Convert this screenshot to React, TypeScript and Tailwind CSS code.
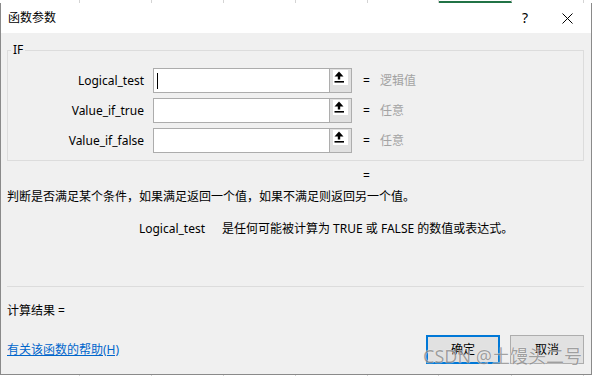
import React from 'react'

// 函数参数 dialog (Excel IF)
const params = [
  { id: 'test', label: 'Logical_test', value: '逻辑值', focused: true },
  { id: 'true', label: 'Value_if_true', value: '任意', focused: false },
  { id: 'false', label: 'Value_if_false', value: '任意', focused: false },
]

const gridCells = [
  { w: 'w-[80px]', sel: false },
  { w: 'w-[72px]', sel: false },
  { w: 'w-[72px]', sel: false },
  { w: 'w-[72px]', sel: false },
  { w: 'w-[72px]', sel: false },
  { w: 'w-[71px]', sel: false },
  { w: 'w-[73px]', sel: true },
  { w: 'w-[72px]', sel: false },
  { w: 'w-[72px]', sel: false },
]

function CollapseButton() {
  return (
    <div className="h-[25px] w-[23px] shrink-0 border border-[#adadad] bg-[#e1e1e1] pl-[3px] pt-[1px]">
      <div className="h-[15px] w-[15px] bg-white">
        <svg width="15" height="15" viewBox="0 0 15 15">
          <polygon points="6,1.5 1.5,6.5 10.5,6.5" fill="#000" />
          <rect x="4.8" y="6" width="2.4" height="3.5" fill="#000" />
          <rect x="1.5" y="11" width="9.5" height="1.6" fill="#000" />
        </svg>
      </div>
    </div>
  )
}

export default function App() {
  return (
    <div
      className="relative h-[376px] w-[593px] overflow-hidden bg-white text-[12px] leading-[16px] text-black"
      style={{ fontFamily: '"Noto Sans", "Noto Sans CJK SC", sans-serif' }}
    >
      {/* excel grid behind */}
      <div className="flex h-[3px]">
        {gridCells.map((c, i) => (
          <div
            key={i}
            className={`${c.w} shrink-0 border-r border-[#d4d4d4] ${c.sel ? 'border-b-2 border-b-[#217346]' : ''}`}
          />
        ))}
      </div>

      <div className="flex h-[372px] w-[592px] flex-col border-x border-b border-[#8a8a8a]">
        {/* title bar */}
        <div className="flex h-[30px] shrink-0 items-center bg-white pl-[7px]">
          <span className="text-[12px]">函数参数</span>
          <span className="ml-auto text-[14px]">?</span>
          <svg className="ml-[34px] mr-[18px]" width="11" height="11" viewBox="0 0 11 11">
            <path d="M0.5 0.5 L10.5 10.5 M10.5 0.5 L0.5 10.5" stroke="#000" strokeWidth="1" />
          </svg>
        </div>

        {/* body */}
        <div className="flex flex-1 flex-col bg-[#f0f0f0] pl-[6px] pr-[7px]">
          <fieldset className="mt-[10px] border border-[#dcdcdc] pb-[7px]">
            <legend className="ml-[3px] px-[2px] leading-[14px]">IF</legend>
            <div className="flex flex-col gap-[5px] pt-[11px]">
              {params.map(p => (
                <div key={p.id} className="flex h-[25px] items-center">
                  <div className="w-[136px] shrink-0 text-right">{p.label}</div>
                  <div className="ml-[9px] flex h-[25px] w-[176px] shrink-0 items-center border border-r-0 border-[#acacac] bg-white pl-[3px]">
                    {p.focused && <div className="h-[16px] w-px bg-black" />}
                  </div>
                  <CollapseButton />
                  <span className="ml-[11px]">=</span>
                  <span className="ml-[10px] text-[#a3a3a3]">{p.value}</span>
                </div>
              ))}
            </div>
          </fieldset>

          <div className="mt-[7px] pl-[356px]">=</div>

          <p className="mt-[5px]">判断是否满足某个条件，如果满足返回一个值，如果不满足则返回另一个值。</p>

          <div className="mt-[16px] flex">
            <div className="w-[198px] shrink-0 text-right">Logical_test</div>
            <div className="ml-[17px]">是任何可能被计算为 TRUE 或 FALSE 的数值或表达式。</div>
          </div>

          <div className="mt-[49px] border-t border-[#dcdcdc]" />

          <div className="mt-[16px]">计算结果 =</div>

          <div className="mt-[16px] flex items-center">
            <a className="text-[#0066cc] underline">有关该函数的帮助(H)</a>
            <button className="ml-auto h-[29px] w-[74px] border-2 border-[#0078d7] bg-[#e1e1e1]">确定</button>
            <button className="ml-[10px] h-[29px] w-[74px] border border-[#adadad] bg-[#e1e1e1]">取消</button>
          </div>
        </div>
      </div>

      <div className="flex h-px">
        {gridCells.map((c, i) => (
          <div key={i} className={`${c.w} shrink-0 border-r border-[#d4d4d4]`} />
        ))}
      </div>

      {/* watermark */}
      <div
        className="pointer-events-none absolute left-[423px] top-[345px] text-[18px] leading-[22px] text-[#8f8f8f] opacity-80"
        style={{ textShadow: '0 0 1px #fff, 0 0 1px #fff' }}
      >
        CSDN @土馒头二号
      </div>
    </div>
  )
}
